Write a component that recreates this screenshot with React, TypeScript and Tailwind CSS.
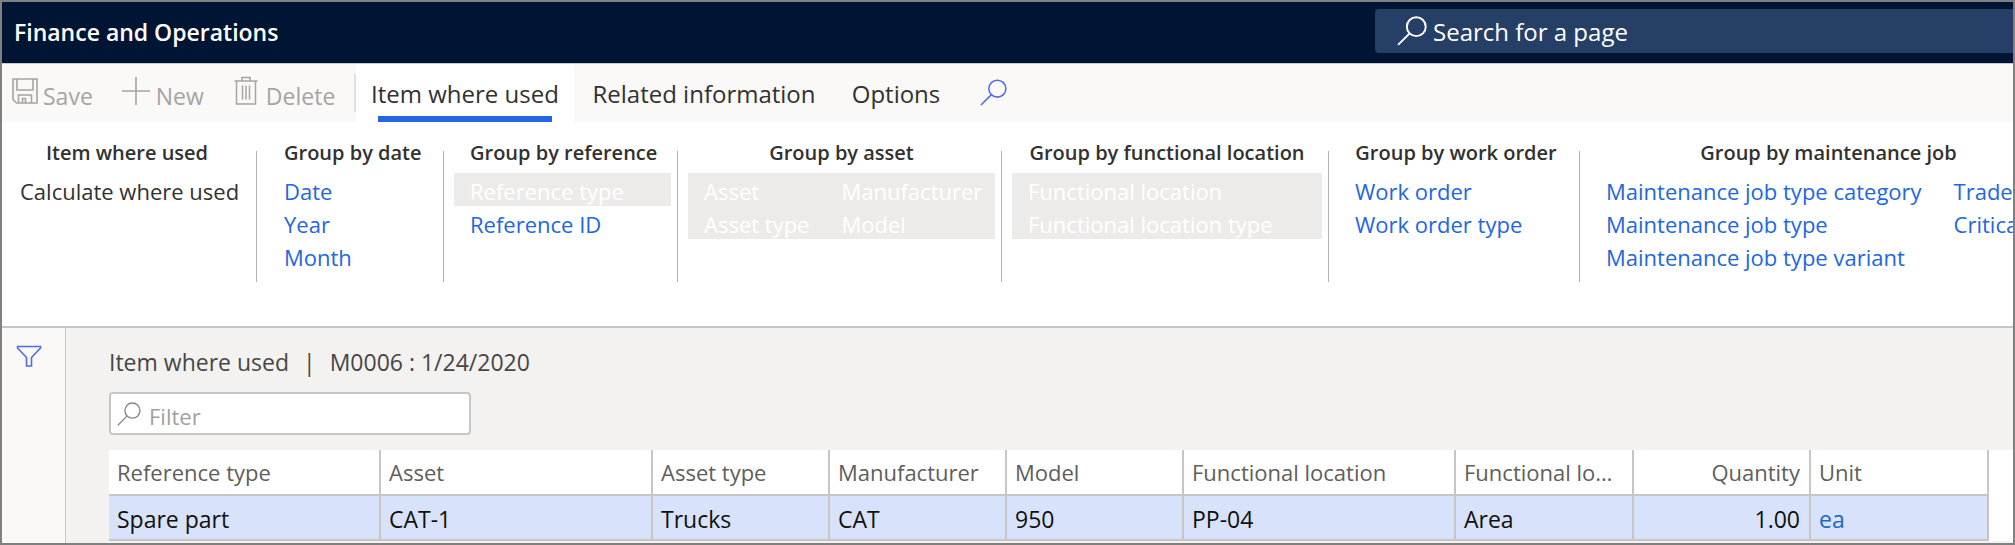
import React from "react";

type Item = { label: string; plain?: boolean };
type Group = { title: string; width: string; columns: Item[][]; activeRows?: number };

const groups: Group[] = [
  { title: "Item where used", width: "w-[254px] pl-[18px] pr-[22px]", columns: [[{ label: "Calculate where used", plain: true }]] },
  { title: "Group by date", width: "w-[186px] pl-[27px] pr-[22px]", columns: [[{ label: "Date" }, { label: "Year" }, { label: "Month" }]] },
  { title: "Group by reference", width: "w-[233px] pl-[26px] pr-[22px]", columns: [[{ label: "Reference type" }, { label: "Reference ID" }]], activeRows: 1 },
  { title: "Group by asset", width: "w-[323px] pl-[26px] pr-[22px]", columns: [[{ label: "Asset" }, { label: "Asset type" }], [{ label: "Manufacturer" }, { label: "Model" }]], activeRows: 2 },
  { title: "Group by functional location", width: "w-[326px] pl-[26px] pr-[22px]", columns: [[{ label: "Functional location" }, { label: "Functional location type" }]], activeRows: 2 },
  { title: "Group by work order", width: "w-[250px] pl-[26px] pr-[22px]", columns: [[{ label: "Work order" }, { label: "Work order type" }]] },
  {
    title: "Group by maintenance job",
    width: "w-[493px] pl-[26px] pr-[22px]",
    columns: [
      [{ label: "Maintenance job type category" }, { label: "Maintenance job type" }, { label: "Maintenance job type variant" }],
      [{ label: "Trade" }, { label: "Criticality" }],
    ],
  },
];

const columns = [
  { title: "Reference type", value: "Spare part", width: "w-[272px]" },
  { title: "Asset", value: "CAT-1", width: "w-[272px]" },
  { title: "Asset type", value: "Trucks", width: "w-[177px]" },
  { title: "Manufacturer", value: "CAT", width: "w-[177px]" },
  { title: "Model", value: "950", width: "w-[177px]" },
  { title: "Functional location", value: "PP-04", width: "w-[272px]" },
  { title: "Functional location type", value: "Area", width: "w-[178px]" },
  { title: "Quantity", value: "1.00", width: "w-[177px]", right: true },
  { title: "Unit", value: "ea", width: "w-[178px]", link: true },
];

function SearchIcon({ className }: { className: string }) {
  return (
    <svg viewBox="0 0 28 28" className={className} fill="none" stroke="currentColor" aria-hidden="true">
      <circle cx="18" cy="10" r="8.8" />
      <path d="M11.8 16.2 1 27" />
    </svg>
  );
}

function SaveIcon() {
  return (
    <svg viewBox="0 0 26 26" className="size-[26px]" fill="none" stroke="currentColor" strokeWidth="1.6" aria-hidden="true">
      <path d="M1 1h24v24H4.5L1 21.5z" />
      <path d="M5 1v11h16V1M6.5 25v-8h13v8M10.5 25v-4.5h3V25" />
    </svg>
  );
}

function PlusIcon() {
  return (
    <svg viewBox="0 0 30 30" className="size-[30px]" fill="none" stroke="currentColor" strokeWidth="1.6" aria-hidden="true">
      <path d="M15 1v28M1 15h28" />
    </svg>
  );
}

function TrashIcon() {
  return (
    <svg viewBox="0 0 24 29" className="h-[29px] w-6" fill="none" stroke="currentColor" strokeWidth="1.5" aria-hidden="true">
      <path d="M0.5 5h23M8 5V1.500h8V5M2.500 5v23h19V5M8.500 9.500v14M12 9.500v14M15.500 9.500v14" />
    </svg>
  );
}

function RibbonGroup({ group }: { group: Group }) {
  const activeRows = group.activeRows ?? 0;
  return (
    <section className={`shrink-0 ${group.width}`}>
      <h2 className="text-center text-[20px] leading-[28px] font-semibold text-[#323130]">{group.title}</h2>
      <div className="-mr-4 -ml-4 mt-[6px] flex">
        {group.columns.map((column, c) => (
          <div key={column[0].label} className={c === group.columns.length - 1 ? "min-w-0 flex-1" : ""}>
            {column.map((item, r) => {
              const active = r < activeRows;
              const tone = active ? "bg-[#edebe9] text-white" : item.plain ? "text-[#323130]" : "text-[#2266e3]";
              return (
                <button key={item.label} type="button" className={`block h-[33px] w-full pt-[3px] pr-4 pl-4 text-left text-[22px] leading-[30px] ${tone}`}>
                  {item.label}
                </button>
              );
            })}
          </div>
        ))}
      </div>
    </section>
  );
}

export default function App() {
  return (
    <div className="flex min-h-screen flex-col overflow-hidden border-2 border-[#808080] bg-white font-['Open_Sans','Noto_Sans',sans-serif] whitespace-nowrap">
      <header className="flex h-[61px] items-start justify-between bg-[#001433]">
        <h1 className="pt-[12px] pl-3 text-[23px] leading-[36px] font-semibold text-white">Finance and Operations</h1>
        <label className="mt-[7px] flex h-[44px] w-[638px] items-center gap-[6px] rounded-l-sm bg-[#263f66] pl-[22px] text-white">
          <SearchIcon className="size-[30px] stroke-[1.8]" />
          <input type="text" aria-label="Search for a page" placeholder="Search for a page" className="min-w-0 flex-1 bg-transparent pt-[2px] text-[24px] leading-[36px] outline-none placeholder:text-white" />
        </label>
      </header>

      <nav className="flex h-[59px] shrink-0 border-t border-[#c8c9cc] bg-[#faf9f8] text-[24px] text-[#323130]">
        <div className="flex w-[354px] pl-[10px] text-[23px] text-[#a6a4a2]">
          <button type="button" disabled className="flex items-start gap-[5px] pt-[14px]">
            <SaveIcon />
            <span className="pt-[3px] leading-[30px]">Save</span>
          </button>
          <button type="button" disabled className="ml-[28px] flex items-start gap-[5px] pt-[12px]">
            <PlusIcon />
            <span className="pt-[5px] leading-[30px]">New</span>
          </button>
          <button type="button" disabled className="ml-[30px] flex items-start gap-[8px] pt-[12px]">
            <TrashIcon />
            <span className="pt-[5px] leading-[30px]">Delete</span>
          </button>
          <span className="mt-[10px] ml-auto h-[38px] w-[2px] bg-[#e1dfdd]" />
        </div>
        <button type="button" className="flex w-[218px] flex-col items-center bg-white pt-[15px] font-medium">
          <span className="leading-[30px]">Item where used</span>
          <span className="mt-[7px] h-[6px] w-[174px] bg-[#2266e3]" />
        </button>
        <button type="button" className="flex w-[260px] items-start justify-center pt-[15px] leading-[30px] font-medium">Related information</button>
        <button type="button" className="ml-[4px] flex w-[116px] items-start justify-center pt-[15px] leading-[30px] font-medium">Options</button>
        <button type="button" aria-label="Search actions" className="ml-[26px] flex w-[28px] items-start pt-[15px] text-[#4f6bed]">
          <SearchIcon className="size-[27px] stroke-[1.6]" />
        </button>
      </nav>

      <div className="flex h-[204px] shrink-0 overflow-hidden pt-[17px]">
        {groups.map((group, i) => (
          <React.Fragment key={group.title}>
            {i > 0 && <div className="mt-[12px] h-[131px] w-px shrink-0 bg-[#b3b0ad]" />}
            <RibbonGroup group={group} />
          </React.Fragment>
        ))}
      </div>

      <div className="flex min-h-0 flex-1 border-t-2 border-[#c8c6c4] bg-[#f3f2f1]">
        <aside className="w-[64px] shrink-0 border-r border-[#c8c6c4] bg-[#faf9f8] pt-[17px] pl-[14px]">
          <button type="button" aria-label="Show filters" className="block text-[#4f6bed]">
            <svg viewBox="0 0 26 23" className="h-[23px] w-[26px]" fill="none" stroke="currentColor" strokeWidth="1.6" aria-hidden="true">
              <path d="M1.5 1.5h23v1.5l-9 9.5V21h-5v-8.5l-9-9.5z" />
            </svg>
          </button>
        </aside>
        <main className="min-w-0 flex-1 pl-[43px]">
          <div className="flex gap-[14px] pt-[17px] text-[23px] leading-[34px] text-[#484644]">
            <span>Item where used</span>
            <span>|</span>
            <span>M0006 : 1/24/2020</span>
          </div>
          <label className="mt-[13px] flex h-[43px] w-[362px] items-center gap-[8px] rounded-sm border-2 border-[#c8c6c4] bg-white pl-[6px] text-[#8a8886]">
            <SearchIcon className="size-[24px] stroke-[1.6]" />
            <input type="text" aria-label="Filter" placeholder="Filter" className="min-w-0 flex-1 bg-transparent pt-[4px] text-[22px] leading-[32px] outline-none placeholder:text-[#a19f9d]" />
          </label>
          <div className="mt-[15px] bg-white">
            <table className="w-[1880px] table-fixed border-separate border-spacing-0">
              <thead>
                <tr>
                  {columns.map((col) => (
                    <th key={col.title} scope="col" className={`h-[46px] overflow-hidden border-r-2 border-b-2 border-[#c8c6c4] pl-2 text-[22px] text-ellipsis font-medium text-[#605e5c] ${col.width} ${col.right ? "pr-[9px] text-right" : "pr-4 text-left"}`}>
                      {col.title}
                    </th>
                  ))}
                </tr>
              </thead>
              <tbody>
                <tr>
                  {columns.map((col) => (
                    <td key={col.title} className={`h-[45px] border-r-2 border-b-2 border-[#c8c6c4] bg-[#d8e3fb] pt-[3px] pl-2 text-[23px] leading-[30px] ${col.right ? "pr-[9px] text-right" : "pr-2"} ${col.link ? "text-[#2266c3]" : "text-[#11100f]"}`}>
                      {col.link ? <a href="#unit">{col.value}</a> : col.value}
                    </td>
                  ))}
                </tr>
              </tbody>
            </table>
          </div>
        </main>
      </div>
    </div>
  );
}
